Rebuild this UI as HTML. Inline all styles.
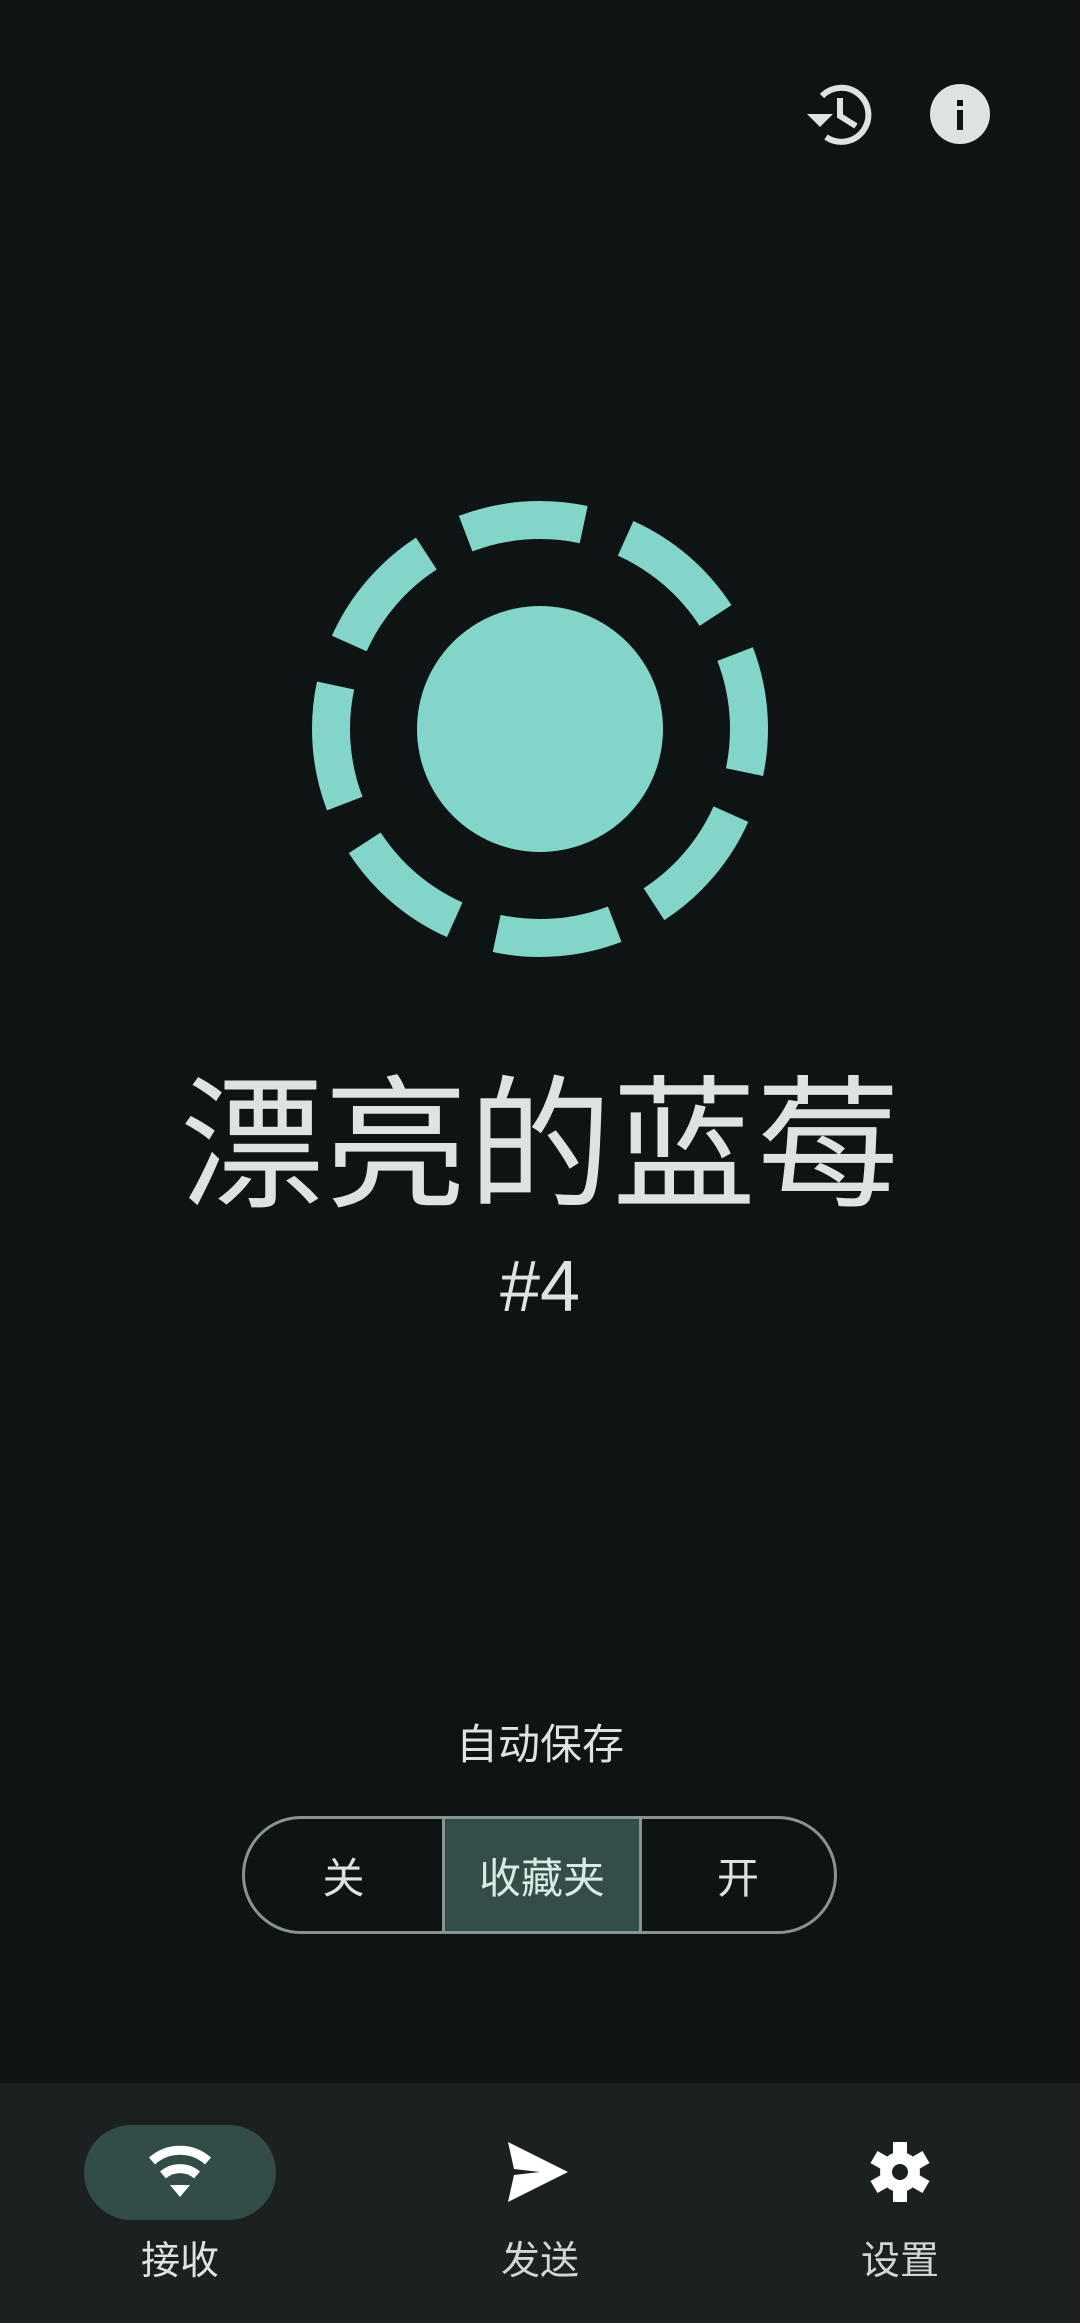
<!DOCTYPE html>
<html><head><meta charset="utf-8"><style>
html,body{margin:0;padding:0;}
body{width:1080px;height:2323px;background:#0e1413;position:relative;overflow:hidden;font-family:"Liberation Sans","Noto Sans CJK SC",sans-serif;color:#dee3e1;}
.abs{position:absolute;}
.c{text-align:center;left:0;width:1080px;}
.title{top:1067px;font-size:144px;line-height:160px;}
.num{top:1245px;font-size:72px;line-height:84px;}
.auto{top:1719px;font-size:42px;line-height:52px;}
.seg{left:242px;top:1816px;width:595px;height:118px;box-sizing:border-box;border:3px solid #8a948f;border-radius:60px;overflow:hidden;display:flex;}
.seg div{display:flex;align-items:center;justify-content:center;font-size:42px;height:100%;box-sizing:border-box;}
.nav{left:0;top:2083px;width:1080px;height:240px;background:#1b2120;}
.lbl{font-size:39px;line-height:48px;width:200px;text-align:center;top:2238px;color:#cfd6d3;}
</style></head><body>
<svg class="abs" style="left:0;top:0" width="1080" height="1000">
 <circle cx="540" cy="729" r="123" fill="#83d5c9"/>
 <circle cx="540" cy="729" r="209" fill="none" stroke="#83d5c9" stroke-width="38" stroke-dasharray="120 44.2" transform="rotate(-21 540 729)"/>
 <g fill="none" stroke="#dee3e1" stroke-width="6">
  <path d="M822 96 A27 27 0 1 1 826 137"/>
  <path d="M840 98 V116 L856 126"/>
 </g>
 <path d="M807 114 L833 114 L820 127 Z" fill="#dee3e1"/>
 <circle cx="960" cy="114" r="30" fill="#dee3e1"/>
 <rect x="957" y="100" width="6" height="6" fill="#0e1413"/>
 <rect x="957" y="110" width="6" height="20" fill="#0e1413"/>
</svg>
<div class="abs c title">漂亮的蓝莓</div>
<div class="abs c num">#4</div>
<div class="abs c auto">自动保存</div>
<div class="abs seg">
 <div style="width:197px;">关</div>
 <div style="width:200px;background:#344d49;border-left:3px solid #8a948f;border-right:3px solid #8a948f;color:#d6ebe6;">收藏夹</div>
 <div style="flex:1;">开</div>
</div>
<div class="abs nav"></div>
<div class="abs" style="left:84px;top:2125px;width:192px;height:95px;border-radius:48px;background:#324d48;"></div>
<svg class="abs" style="left:0;top:2130px" width="1080" height="90">
 <g fill="none" stroke="#fff" stroke-width="9">
  <path d="M152 31 A42 42 0 0 1 208 31"/>
  <path d="M163 45 A26 26 0 0 1 197 45"/>
 </g>
 <path d="M170 55 L190 55 L180 67 Z" fill="#fff"/>
 <path d="M508 12 L568 42 L508 72 L514 45 L540 42 L514 39 Z" fill="#fff"/>
 <g transform="translate(900 42)" fill="#fff">
  <circle r="20"/>
  <rect x="-7" y="-30" width="14" height="60"/>
  <rect x="-7" y="-30" width="14" height="60" transform="rotate(60)"/>
  <rect x="-7" y="-30" width="14" height="60" transform="rotate(120)"/>
  <circle r="8" fill="#1b2120"/>
 </g>
</svg>
<div class="abs lbl" style="left:80px;color:#dee3e1">接收</div>
<div class="abs lbl" style="left:440px;">发送</div>
<div class="abs lbl" style="left:800px;">设置</div>
</body></html>
